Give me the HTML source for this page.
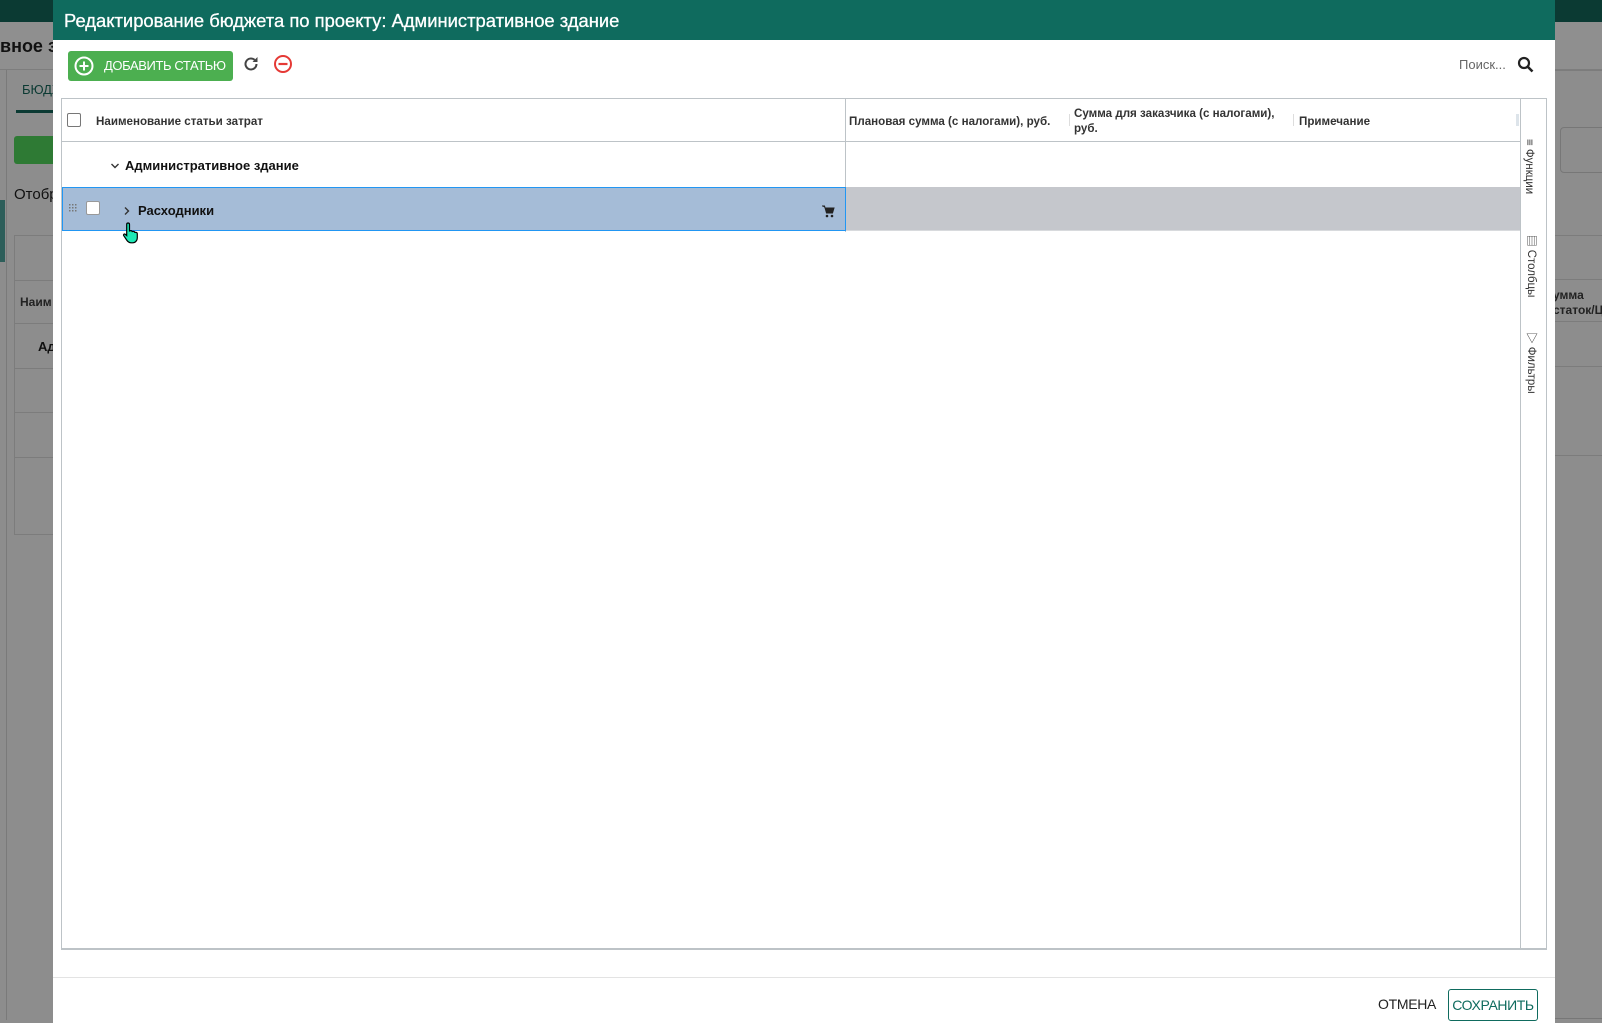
<!DOCTYPE html>
<html><head><meta charset="utf-8"><style>
*{box-sizing:border-box;margin:0;padding:0}
body{width:1602px;height:1023px;overflow:hidden;position:relative;background:#8d8d8d;font-family:"Liberation Sans","Noto Sans CJK SC",sans-serif}
.a{position:absolute}
.hdr{font-size:11.6px;font-weight:bold;color:#333}
</style></head><body>
<div class="a" style="left:0;top:0;width:1602px;height:22px;background:#0b3a33"></div>
<div class="a" style="left:0;top:22px;width:1602px;height:48px;background:#8f8f8f;border-bottom:1px solid #7d7d7d"></div>
<div class="a" style="left:0;top:36px;font-size:18px;font-weight:bold;color:#111">вное з</div>
<div class="a" style="left:6px;top:70px;width:1px;height:950px;background:#7a7a7a"></div>
<div class="a" style="left:22px;top:82px;font-size:13px;color:#0b3a33">БЮДЖ</div>
<div class="a" style="left:16px;top:110px;width:40px;height:3px;background:#0b3a33"></div>
<div class="a" style="left:14px;top:136px;width:45px;height:28px;background:#2e7a34;border-radius:3px"></div>
<div class="a" style="left:14px;top:186px;font-size:15px;color:#111">Отобр</div>
<div class="a" style="left:0;top:200px;width:5px;height:62px;background:#2d5e5a"></div>
<div class="a" style="left:14px;top:235px;width:45px;height:300px;border:1px solid #7c7c7c;border-right:none"></div>
<div class="a" style="left:14px;top:280px;width:45px;height:1px;background:#7c7c7c"></div>
<div class="a" style="left:14px;top:323px;width:45px;height:1px;background:#7c7c7c"></div>
<div class="a" style="left:14px;top:368px;width:45px;height:1px;background:#7c7c7c"></div>
<div class="a" style="left:14px;top:412px;width:45px;height:1px;background:#7c7c7c"></div>
<div class="a" style="left:14px;top:457px;width:45px;height:1px;background:#7c7c7c"></div>
<div class="a" style="left:20px;top:295px;font-size:12px;font-weight:bold;color:#222">Наим</div>
<div class="a" style="left:38px;top:339px;font-size:13px;font-weight:bold;color:#111">Ад</div>
<div class="a" style="left:1555px;top:70px;width:47px;height:1px;background:#7c7c7c"></div>
<div class="a" style="left:1560px;top:127px;width:50px;height:46px;border:1px solid #777;border-radius:4px"></div>
<div class="a" style="left:1555px;top:235px;width:47px;height:1px;background:#7c7c7c"></div>
<div class="a" style="left:1555px;top:279px;width:47px;height:1px;background:#7c7c7c"></div>
<div class="a" style="left:1555px;top:321px;width:47px;height:1px;background:#7c7c7c"></div>
<div class="a" style="left:1555px;top:366px;width:47px;height:1px;background:#7c7c7c"></div>
<div class="a" style="left:1555px;top:455px;width:47px;height:1px;background:#7c7c7c"></div>
<div class="a" style="left:1553px;top:288px;font-size:12px;font-weight:bold;color:#222;line-height:15px;white-space:nowrap">умма<br>статок/Ц</div>
<div class="a" style="left:1555px;top:1018px;width:47px;height:1px;background:#777"></div>

<div class="a" style="left:53px;top:0;width:1502px;height:1023px;background:#fff">
  <div class="a" style="left:0;top:0;width:1502px;height:40px;background:#0f6b5e;color:#fff;font-size:18.4px;padding:10px 0 0 11px;-webkit-text-stroke:0.3px #fff">Редактирование бюджета по проекту: Административное здание</div>
  <div class="a" style="left:15px;top:51px;width:165px;height:30px;background:#4caf50;border-radius:3px;color:#fff;font-size:13px">
    <svg class="a" style="left:5px;top:4px" width="22" height="22" viewBox="0 0 22 22"><circle cx="11" cy="11" r="8.5" fill="none" stroke="#fff" stroke-width="2"/><path d="M11 6.5v9M6.5 11h9" stroke="#fff" stroke-width="2"/></svg>
    <span class="a" style="left:36px;top:7px;letter-spacing:-0.4px">ДОБАВИТЬ СТАТЬЮ</span>
  </div>
  <svg class="a" style="left:188px;top:54px" width="20" height="20" viewBox="0 0 20 20"><path d="M15.5 10a5.5 5.5 0 1 1-1.8-4.1" fill="none" stroke="#444" stroke-width="2"/><path d="M16.5 3v5h-5z" fill="#444"/></svg>
  <svg class="a" style="left:220px;top:54px" width="20" height="20" viewBox="0 0 20 20"><circle cx="10" cy="10" r="8" fill="none" stroke="#e53935" stroke-width="2"/><path d="M5.5 10h9" stroke="#e53935" stroke-width="2.2"/></svg>
  <div class="a" style="left:1406px;top:57px;font-size:13px;color:#666">Поиск...</div>
  <svg class="a" style="left:1464px;top:56px" width="18" height="18" viewBox="0 0 18 18"><circle cx="7" cy="7" r="5" fill="none" stroke="#222" stroke-width="2.2"/><path d="M10.5 10.5l5 5" stroke="#222" stroke-width="2.6"/></svg>

  <div class="a" style="left:8px;top:98px;width:1486px;height:852px;border:1px solid #bdc3c7;border-bottom:2px solid #bdc3c7">
    <div class="a" style="left:0;top:0;width:1458px;height:43px;border-bottom:1px solid #bdc3c7"></div>
    <div class="a" style="left:5px;top:14px;width:14px;height:14px;border:1.5px solid #777;border-radius:2px"></div>
    <div class="a hdr" style="left:34px;top:16px">Наименование статьи затрат</div>
    <div class="a" style="left:783px;top:0;width:1px;height:133px;background:#bdc3c7"></div>
    <div class="a hdr" style="left:787px;top:16px">Плановая сумма (с налогами), руб.</div>
    <div class="a" style="left:1007px;top:15px;width:1px;height:12px;background:#ddd"></div>
    <div class="a hdr" style="left:1012px;top:7px;line-height:15px">Сумма для заказчика (с налогами),<br>руб.</div>
    <div class="a" style="left:1231px;top:15px;width:1px;height:12px;background:#ddd"></div>
    <div class="a hdr" style="left:1237px;top:16px">Примечание</div>
    <div class="a" style="left:1454px;top:15px;width:3px;height:12px;background:#dde4ea"></div>
    <div class="a" style="left:0;top:88px;width:1458px;height:1px;background:#dde2e6"></div>
    <svg class="a" style="left:48px;top:62px" width="10" height="10" viewBox="0 0 10 10"><path d="M1.5 3l3.5 3.5 3.5-3.5" fill="none" stroke="#333" stroke-width="1.4"/></svg>
    <div class="a" style="left:63px;top:59px;font-size:13px;font-weight:bold;color:#111">Административное здание</div>
    <div class="a" style="left:0;top:88px;width:784px;height:44px;background:#a5bcd7;border:1px solid #2196f3"></div>
    <div class="a" style="left:784px;top:88px;width:674px;height:44px;background:#c5c7cc;border-bottom:1px solid #d8dadd"></div>
    <svg class="a" style="left:7px;top:105px" width="10" height="8" viewBox="0 0 10 8"><g fill="#777"><rect x="0" y="0" width="1.5" height="1.5"/><rect x="3" y="0" width="1.5" height="1.5"/><rect x="6" y="0" width="1.5" height="1.5"/><rect x="0" y="3" width="1.5" height="1.5"/><rect x="3" y="3" width="1.5" height="1.5"/><rect x="6" y="3" width="1.5" height="1.5"/><rect x="0" y="6" width="1.5" height="1.5"/><rect x="3" y="6" width="1.5" height="1.5"/><rect x="6" y="6" width="1.5" height="1.5"/></g></svg>
    <div class="a" style="left:24px;top:102px;width:14px;height:14px;background:#fff;border:1px solid #999;border-radius:2px"></div>
    <svg class="a" style="left:60px;top:107px" width="10" height="10" viewBox="0 0 10 10"><path d="M3 1.5l3.5 3.5-3.5 3.5" fill="none" stroke="#333" stroke-width="1.4"/></svg>
    <div class="a" style="left:76px;top:104px;font-size:13px;font-weight:bold;color:#111">Расходники</div>
    <svg class="a" style="left:759px;top:105px" width="14" height="14" viewBox="0 0 14 14"><path d="M1 2h2.5l2 7h6l1.5-5H4.5" fill="#222" stroke="#222" stroke-width="1"/><circle cx="6" cy="12" r="1.3" fill="#222"/><circle cx="11" cy="12" r="1.3" fill="#222"/></svg>
    <svg class="a" style="left:60px;top:122px" width="18" height="24" viewBox="0 0 18 24"><path d="M6 2c1 0 1.5.6 1.5 1.5V10l1-.3c1-.2 1.5.3 1.7.9l1-.2c1-.1 1.4.4 1.6 1l.8-.1c1 0 1.700.6 1.7 1.6V17c0 2.5-2 4.8-4.5 4.8H9c-2 0-3-1-4-2.3L1.7 14.6c-.5-.8.2-1.8 1.2-1.5l1.8 1.5V3.5C4.7 2.6 5.1 2 6 2z" fill="#1de9b6" stroke="#000" stroke-width="1.2"/></svg>
    <div class="a" style="left:1458px;top:0;width:1px;height:850px;background:#bdc3c7"></div>
    <div class="a" style="left:1461px;top:40px;writing-mode:vertical-rl;font-size:11.5px;color:#333">≡ Функции</div>
    <div class="a" style="left:1461px;top:136px;writing-mode:vertical-rl;font-size:11.5px;color:#333">▥ Столбцы</div>
    <div class="a" style="left:1461px;top:233px;writing-mode:vertical-rl;font-size:11.5px;color:#333">▽ Фильтры</div>
  </div>

  <div class="a" style="left:0;top:977px;width:1502px;height:1px;background:#e3e3e3"></div>
  <div class="a" style="left:1325px;top:996px;font-size:14px;color:#222;letter-spacing:-0.3px">ОТМЕНА</div>
  <div class="a" style="left:1395px;top:989px;width:90px;height:32px;border:1px solid #0f6b5e;border-radius:3px;color:#0f6b5e;font-size:14px;padding-top:7px;text-align:center;letter-spacing:-0.4px">СОХРАНИТЬ</div>
</div>
</body></html>
